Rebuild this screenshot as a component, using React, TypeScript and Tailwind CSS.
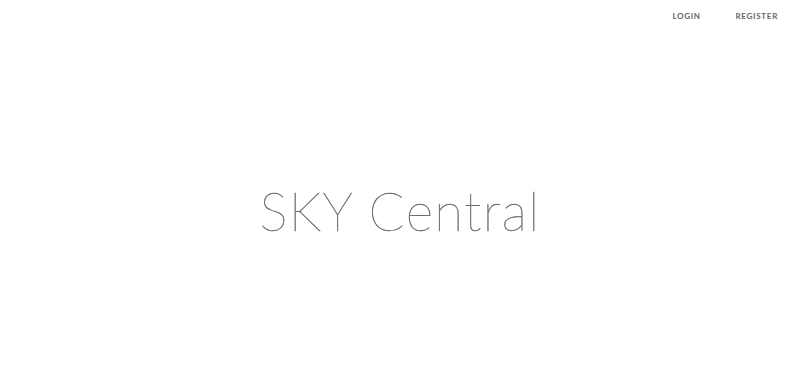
export default function App() {
  return (
    <div className="flex h-[388px] w-full flex-col bg-white font-['Lato',sans-serif]">
      {/* nav */}
      <nav className="flex justify-end gap-[35px] pr-[22px] pt-[10px]">
        <a className="text-[8px] font-bold uppercase tracking-[0.08em] text-[#666]">Login</a>
        <a className="text-[8px] font-bold uppercase tracking-[0.09em] text-[#666]">Register</a>
      </nav>
      {/* hero */}
      <div className="flex flex-1 items-center justify-center pt-[10px]">
        <h1 className="text-[53px] font-thin leading-none tracking-[0.025em] text-[#6a6d71] [-webkit-text-stroke:0.45px_#6a6d71]">SKY Central</h1>
      </div>
    </div>
  )
}
